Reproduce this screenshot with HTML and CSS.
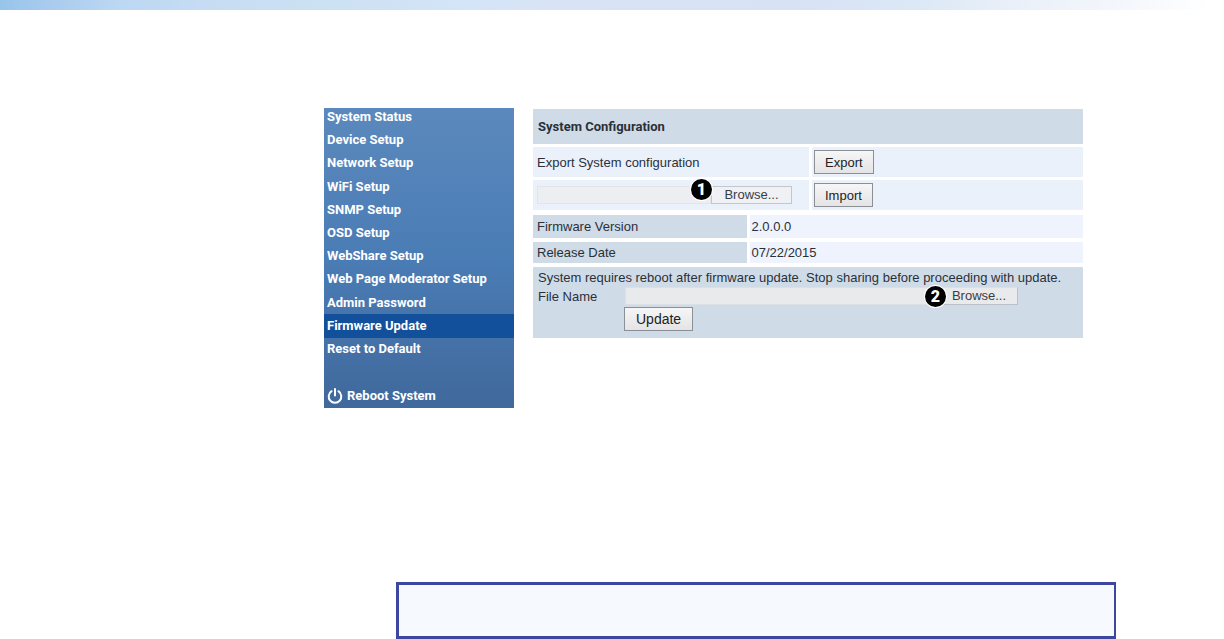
FILE: index.html
```html
<!DOCTYPE html>
<html lang="en">
<head>
  <meta charset="UTF-8" />
  <meta name="viewport" content="width=device-width, initial-scale=1.0" />
  <title>Firmware Update</title>
  <link rel="stylesheet" href="styles.css">
</head>
<body>
  <div class="top-band"></div>

  <div class="screen">
    <nav class="sidebar">
      <ul class="menu">
        <li><a href="#status">System Status</a></li>
        <li><a href="#device">Device Setup</a></li>
        <li><a href="#network">Network Setup</a></li>
        <li><a href="#wifi">WiFi Setup</a></li>
        <li><a href="#snmp">SNMP Setup</a></li>
        <li><a href="#osd">OSD Setup</a></li>
        <li><a href="#webshare">WebShare Setup</a></li>
        <li><a href="#moderator">Web Page Moderator Setup</a></li>
        <li><a href="#password">Admin Password</a></li>
        <li><a href="#firmware" class="active">Firmware Update</a></li>
        <li><a href="#reset">Reset to Default</a></li>
      </ul>
      <a href="#reboot" class="reboot">
        <svg width="16" height="16" viewBox="0 0 16 16" fill="none" stroke="currentColor" stroke-width="2" stroke-linecap="round" aria-hidden="true">
          <path d="M4.6 3.2A6.3 6.3 0 1 0 11.4 3.2" />
          <path d="M8 1v6.5" />
        </svg>
        Reboot System
      </a>
    </nav>

    <main class="content">
      <h1>System Configuration</h1>

      <div class="row">
        <span class="row-label">Export System configuration</span>
        <div class="row-action"><button type="button" class="btn">Export</button></div>
      </div>

      <div class="row">
        <div class="row-label">
          <div class="picker">
            <input type="text" class="path" aria-label="Configuration file" readonly>
            <button type="button" class="browse">Browse...</button>
            <span class="badge">1</span>
          </div>
        </div>
        <div class="row-action"><button type="button" class="btn">Import</button></div>
      </div>

      <table class="version">
        <tr><th scope="row">Firmware Version</th><td>2.0.0.0</td></tr>
        <tr><th scope="row">Release Date</th><td>07/22/2015</td></tr>
      </table>

      <form class="update">
        <p>System requires reboot after firmware update. Stop sharing before proceeding with update.</p>
        <div class="file-row">
          <label for="fileName">File Name</label>
          <div class="picker">
            <input type="text" class="path" id="fileName" readonly>
            <button type="button" class="browse">Browse...</button>
            <span class="badge">2</span>
          </div>
        </div>
        <button type="button" class="btn btn-update">Update</button>
      </form>
    </main>
  </div>

  <div class="note"></div>
</body>
</html>
```

FILE: styles.css
```css
* {
  box-sizing: border-box;
  margin: 0;
  padding: 0;
}

body {
  font-family: "Liberation Sans", Arial, sans-serif;
  font-size: 13px;
  background-color: #fff;
  color: #2b3038;
}

.top-band {
  height: 10px;
  background: linear-gradient(to right, #97c5ea 0%, #a9cbee 4%, #bdd8f3 10%, #c9def3 20%, #d3e5f6 38%, #d8e4f6 45%, #d7e3f5 65%, #dbe8f5 75%, #eaf0f9 83%, #f3f6fc 91%, #fff 99%);
}

.screen {
  display: flex;
  align-items: flex-start;
  gap: 19px;
  padding: 98px 141px 0 324px;
}

.sidebar {
  display: flex;
  flex-direction: column;
  flex: 0 0 190px;
  min-height: 300px;
  padding-bottom: 3px;
  background: linear-gradient(#5b89bd, #4a7cb5 50%, #40699c);
  font-weight: bold;
}

.sidebar a {
  display: block;
  padding: 0 3px;
  line-height: 18px;
  color: #fff;
  text-decoration: none;
}

.menu {
  display: flex;
  flex: 1;
  flex-direction: column;
  justify-content: space-between;
  margin-bottom: 29px;
  list-style: none;
  font-family: Roboto, Arial, sans-serif;
}

.sidebar .active {
  margin: -3px 0;
  padding: 3px;
  background-color: #13509b;
}

.sidebar .reboot {
  display: flex;
  align-items: center;
  gap: 4px;
  font-family: Roboto, Arial, sans-serif;
}

.content {
  flex: 1;
  min-width: 0;
  padding-top: 1px;
}

h1 {
  margin-bottom: 3px;
  padding: 0 5px;
  background-color: #cfdbe6;
  font-family: Roboto, Arial, sans-serif;
  font-size: 13px;
  line-height: 35px;
}

.row {
  display: flex;
  gap: 3px;
  margin-bottom: 3px;
}

.row-label,
.row-action {
  display: flex;
  align-items: center;
  height: 30px;
  padding: 0 4px;
  background-color: #eaf1fb;
}

.row-label {
  flex: 0 0 276px;
}

.row-action {
  flex: 1;
  padding: 0 2px;
}

.btn {
  height: 24px;
  padding: 0 10px;
  border: 1px solid #8b8f96;
  background: linear-gradient(#f6f6f6, #e4e4e6);
  color: #222;
  font: inherit;
}

.picker {
  position: relative;
  display: flex;
  flex: 0 0 255px;
  min-width: 0;
  height: 18px;
}

.path {
  flex: 1;
  min-width: 0;
  border: 1px solid #e3e4e8;
  background-color: #eceef1;
}

.browse {
  flex: 0 0 81px;
  border: 1px solid #c3c6cb;
  background-color: #eff1f4;
  color: #3a3d44;
  font: inherit;
  line-height: 16px;
}

/* numbered callout over the left edge of the browse button */
.badge {
  position: absolute;
  top: -7px;
  right: 80px;
  width: 21px;
  height: 21px;
  border-radius: 50%;
  background-color: #000;
  box-shadow: 0 0 0 1px #fff;
  color: #fff;
  font-family: Roboto, Arial, sans-serif;
  font-size: 16px;
  font-weight: 900;
  line-height: 21px;
  text-align: center;
}

.version {
  width: 100%;
  margin-top: 5px;
  border-collapse: collapse;
}

.version th,
.version td {
  height: 25px;
  padding: 0 4px;
  border-bottom: 4px solid #fff;
  font-weight: normal;
  text-align: left;
}

.version th {
  width: 215px;
  border-right: 3px solid #fff;
  background-color: #cfdbe6;
}

.version td {
  padding-left: 2px;
  background-color: #eef3fd;
}

.update {
  padding: 2px 5px 7px;
  background-color: #cfdce8;
}

.update p {
  line-height: 18px;
}

.file-row {
  display: flex;
  align-items: center;
}

.file-row label {
  flex: 0 0 87px;
}

.file-row .picker {
  flex-basis: 393px;
}

.file-row .path,
.file-row .browse {
  border-color: #dcdfe4;
  background-color: #e9eaec;
}

.file-row .browse {
  padding-left: 4px;
  border-left: none;
  border-right-color: #bcc1c9;
  border-bottom-color: #bcc1c9;
}

.file-row .badge {
  top: -1px;
  right: 72px;
}

.btn-update {
  display: block;
  margin: 2px 0 0 86px;
  padding: 0 11px;
  font-size: 14px;
}

.note {
  height: 57px;
  margin: 174px 108px 0 396px;
  border: 3px solid #3e479f;
  border-right-width: 2px;
  background-color: #f6fafe;
}
```
